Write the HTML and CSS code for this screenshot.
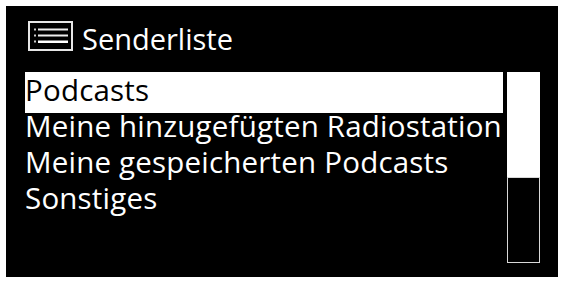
FILE: index.html
```html
<!DOCTYPE html>
<html lang="de">
<head>
<meta charset="utf-8">
<link rel="stylesheet" href="styles.css">
</head>
<body>
<div class="screen">
  <div class="header">
    <svg class="icon" width="45" height="30" viewBox="0 0 45 30">
      <rect x="1" y="1" width="43" height="28" fill="none" stroke="#e6e6e6" stroke-width="2"/>
      <rect x="6" y="7.5" width="2" height="2" fill="#ccc"/>
      <rect x="6" y="13.5" width="2" height="2" fill="#ccc"/>
      <rect x="6" y="19.5" width="2" height="2" fill="#ccc"/>
      <rect x="10" y="7.5" width="30" height="2" fill="#eee"/>
      <rect x="10" y="13.5" width="30" height="2" fill="#eee"/>
      <rect x="10" y="19.5" width="30" height="2.5" fill="#fff"/>
    </svg>
    <span class="title">Senderliste</span>
  </div>
  <div class="body">
    <ul class="list">
      <li class="item selected">Podcasts</li>
      <li class="item">Meine hinzugefügten Radiostation</li>
      <li class="item">Meine gespeicherten Podcasts</li>
      <li class="item">Sonstiges</li>
    </ul>
    <div class="scrollbar">
      <div class="thumb"></div>
      <div class="track"></div>
    </div>
  </div>
</div>
</body>
</html>
```
FILE: styles.css
```css
html, body {
  margin: 0;
  padding: 0;
  background: #fff;
}
.screen {
  margin: 6px 0 0 6px;
  width: 552px;
  height: 271px;
  box-sizing: border-box;
  background: #000;
  padding: 15px 18px 14px 19px;
  display: flex;
  flex-direction: column;
  font-family: "Open Sans", "Liberation Sans", sans-serif;
  color: #fff;
}
.header {
  display: flex;
  align-items: flex-start;
  height: 30px;
  margin-left: 3px;
}
.icon {
  display: block;
  flex: none;
}
.title {
  font-size: 29px;
  line-height: 30px;
  margin-left: 9px;
  margin-top: 3px;
}
.body {
  display: flex;
  margin-top: 21px;
  gap: 4px;
}
.list {
  list-style: none;
  margin: 0;
  padding: 0;
  flex: 1;
  min-width: 0;
}
.item {
  font-size: 29.5px;
  line-height: 36px;
  letter-spacing: 0.2px;
  white-space: nowrap;
}
.item.selected {
  background: #fff;
  color: #000;
  padding-bottom: 5px;
  margin-bottom: -5px;
}
.scrollbar {
  width: 33px;
  height: 191px;
  display: flex;
  flex-direction: column;
  flex: none;
}
.thumb {
  height: 105px;
  background: #fff;
}
.track {
  flex: 1;
  border: 1.5px solid #d8d8d8;
  box-sizing: border-box;
}
```
